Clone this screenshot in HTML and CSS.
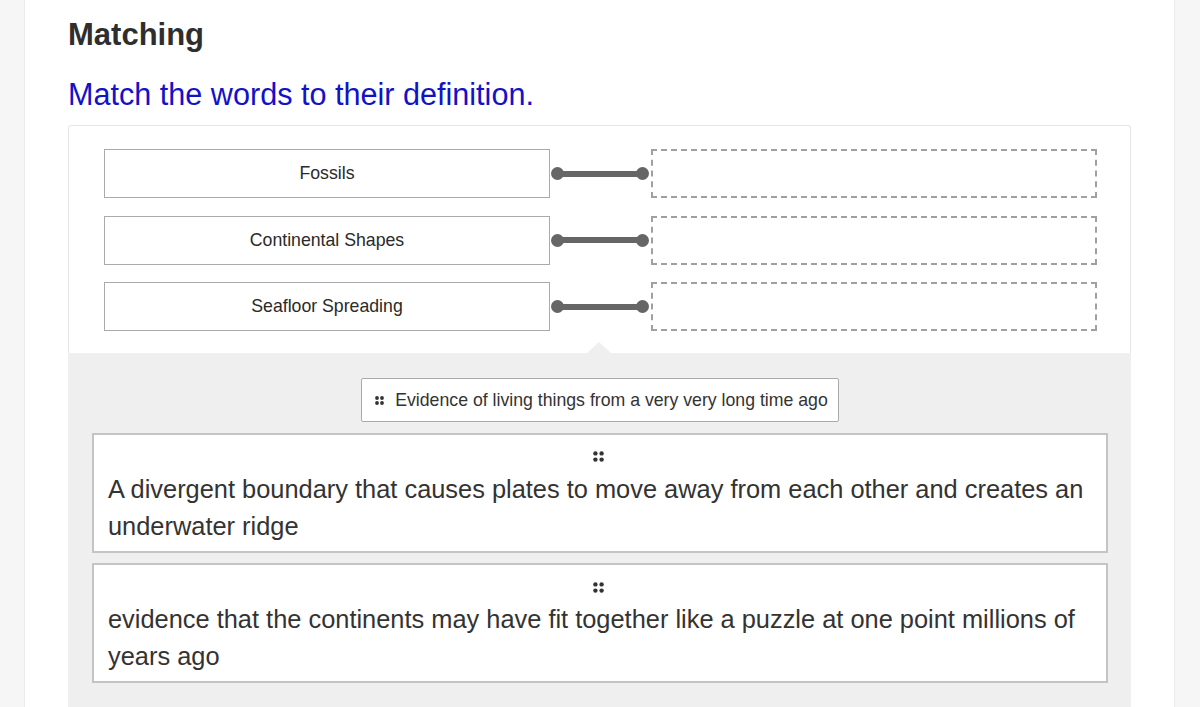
FILE: index.html
```html
<!DOCTYPE html>
<html>
<head>
<meta charset="utf-8">
<link rel="stylesheet" href="styles.css">
</head>
<body>
<div class="page">
  <div class="gutter gutter-left"></div>
  <main class="main">
    <h1 class="title">Matching</h1>
    <p class="prompt">Match the words to their definition.</p>
    <section class="panel">
      <div class="pairs">
        <div class="pair">
          <div class="term">Fossils</div>
          <div class="link"><span class="dot"></span><span class="bar"></span><span class="dot"></span></div>
          <div class="drop"></div>
        </div>
        <div class="pair">
          <div class="term">Continental Shapes</div>
          <div class="link"><span class="dot"></span><span class="bar"></span><span class="dot"></span></div>
          <div class="drop"></div>
        </div>
        <div class="pair">
          <div class="term">Seafloor Spreading</div>
          <div class="link"><span class="dot"></span><span class="bar"></span><span class="dot"></span></div>
          <div class="drop"></div>
        </div>
      </div>
      <div class="bank">
        <div class="chip">
          <svg class="grip" width="9" height="9" viewBox="0 0 9 9"><circle cx="2" cy="2" r="1.9"/><circle cx="7" cy="2" r="1.9"/><circle cx="2" cy="7" r="1.9"/><circle cx="7" cy="7" r="1.9"/></svg>
          <span>Evidence of living things from a very very long time ago</span>
        </div>
        <div class="card">
          <div class="card-grip"><svg class="grip" width="11" height="11" viewBox="0 0 11 11"><circle cx="2.4" cy="2.4" r="2.2"/><circle cx="8.6" cy="2.4" r="2.2"/><circle cx="2.4" cy="8.6" r="2.2"/><circle cx="8.6" cy="8.6" r="2.2"/></svg></div>
          <p class="card-text">A divergent boundary that causes plates to move away from each other and creates an underwater ridge</p>
        </div>
        <div class="card">
          <div class="card-grip"><svg class="grip" width="11" height="11" viewBox="0 0 11 11"><circle cx="2.4" cy="2.4" r="2.2"/><circle cx="8.6" cy="2.4" r="2.2"/><circle cx="2.4" cy="8.6" r="2.2"/><circle cx="8.6" cy="8.6" r="2.2"/></svg></div>
          <p class="card-text">evidence that the continents may have fit together like a puzzle at one point millions of years ago</p>
        </div>
      </div>
    </section>
  </main>
  <div class="gutter gutter-right"></div>
</div>
</body>
</html>
```
FILE: styles.css
```css
* { box-sizing: border-box; }
html, body { margin: 0; padding: 0; }
body {
  font-family: "Liberation Sans", Arial, Helvetica, sans-serif;
  background: #f6f6f6;
  color: #333;
  height: 707px;
  overflow: hidden;
}
.page {
  display: flex;
  height: 707px;
}
.gutter {
  background: #f6f6f6;
}
.gutter-left {
  width: 25px;
  border-right: 1px solid #ececec;
}
.gutter-right {
  width: 26px;
  border-left: 1px solid #ececec;
}
.main {
  flex: 1;
  background: #fff;
  padding: 17px 43px 0 43px;
}
.title {
  margin: 0;
  font-size: 31px;
  line-height: 36px;
  font-weight: bold;
  color: #2e2e2e;
}
.prompt {
  margin: 23px 0 0;
  font-size: 30.6px;
  line-height: 36px;
  color: #1212c8;
}
.panel {
  margin-top: 13px;
  border: 1px solid #e6e6e6;
  border-bottom: none;
  border-radius: 3px 3px 0 0;
  background: #fff;
}
.pairs {
  display: flex;
  flex-direction: column;
  gap: 17.5px;
  padding: 23px 32px 22px 35px;
}
.pair {
  display: flex;
  align-items: center;
  height: 49px;
}
.term {
  width: 446px;
  height: 49px;
  border: 1px solid #aaa;
  display: flex;
  align-items: center;
  justify-content: center;
  font-size: 17.7px;
  color: #2a2a2a;
}
.link {
  width: 101px;
  display: flex;
  align-items: center;
  padding: 0 2px 0 1px;
}
.dot {
  width: 13px;
  height: 13px;
  border-radius: 50%;
  background: #666;
  flex: none;
}
.bar {
  flex: 1;
  height: 6px;
  background: #666;
  margin: 0 -2px;
}
.drop {
  width: 446px;
  height: 49px;
  border: 2px dashed #a0a0a0;
}
.bank {
  position: relative;
  background: #efefef;
  padding: 25px 23px 30px 24px;
  display: flex;
  flex-direction: column;
  align-items: center;
  gap: 10.5px;
  margin: 0 -1px;
}
.bank::before {
  content: "";
  position: absolute;
  top: -11px;
  left: 519px;
  width: 0;
  height: 0;
  border-left: 12px solid transparent;
  border-right: 12px solid transparent;
  border-bottom: 11px solid #efefef;
}
.chip {
  display: flex;
  align-items: center;
  gap: 11px;
  height: 44px;
  padding: 0 10px 0 13px;
  background: #fff;
  border: 1px solid #aaa;
  border-radius: 2px;
  font-size: 17.7px;
  color: #333;
}
.grip { fill: #333; display: block; }
.card {
  align-self: stretch;
  background: #fff;
  border: 2px solid #c4c4c4;
  padding: 14px 14px 6px;
}
.card-grip {
  height: 16px;
  display: flex;
  align-items: center;
  justify-content: center;
  padding-right: 4px;
}
.card-text {
  margin: 6px 0 0;
  font-size: 25.4px;
  line-height: 37px;
  color: #333;
}
```
